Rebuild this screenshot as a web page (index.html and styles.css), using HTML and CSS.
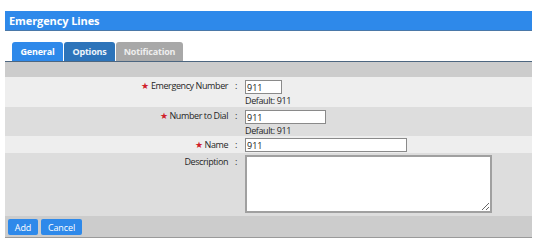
FILE: index.html
```html
<!DOCTYPE html>
<html lang="en">
<head>
    <meta charset="UTF-8">
    <meta name="viewport" content="width=device-width, initial-scale=1.0">
    <title>Emergency Lines</title>
    <link rel="stylesheet" href="styles.css">
</head>
<body>
    <div class="panel">
        <div class="panel-title">Emergency Lines</div>

        <div class="tabs">
            <button class="tab tab-active">General</button>
            <button class="tab tab-options">Options</button>
            <button class="tab tab-off">Notification</button>
        </div>
        <div class="toolbar"></div>

        <div class="form">
            <div class="row row-light row-tall">
                <label class="label"><span class="req">&#9733;</span> Emergency Number <span class="colon">:</span></label>
                <div class="field">
                    <input class="input input-xs" type="text" value="911">
                    <div class="hint">Default: 911</div>
                </div>
            </div>
            <div class="row row-dark row-tall">
                <label class="label"><span class="req">&#9733;</span> Number to Dial <span class="colon">:</span></label>
                <div class="field">
                    <input class="input input-sm" type="text" value="911">
                    <div class="hint">Default: 911</div>
                </div>
            </div>
            <div class="row row-light">
                <label class="label"><span class="req">&#9733;</span> Name <span class="colon">:</span></label>
                <div class="field">
                    <input class="input input-md" type="text" value="911">
                </div>
            </div>
            <div class="row row-dark row-area">
                <label class="label">Description <span class="colon">:</span></label>
                <div class="field">
                    <textarea class="input textarea"></textarea>
                </div>
            </div>
        </div>

        <div class="actions">
            <button class="btn btn-add">Add</button>
            <button class="btn btn-cancel">Cancel</button>
        </div>
    </div>
</body>
</html>
```

FILE: styles.css
```css
:root {
    --blue: #2e89ea;
    --blue-dark: #2d74ba;
    --tab-off: #a8a8a8;
    --row-light: #eeeeee;
    --row-dark: #dddddd;
    --band: #cccccc;
    --text: #262626;
}

body {
    margin: 0;
    background: #ffffff;
    font-family: 'Open Sans', 'Noto Sans', sans-serif;
    font-size: 9px;
    letter-spacing: -0.4px;
    color: var(--text);
}

.panel {
    width: 527px;
    margin: 11px 0 0 5px;
}

.panel-title {
    height: 19px;
    line-height: 19px;
    padding-left: 4px;
    background: var(--blue);
    border-bottom: 1px solid #4a78a8;
    color: #ffffff;
    font-size: 11px;
    font-weight: bold;
    letter-spacing: -0.1px;
}

.tabs {
    display: flex;
    gap: 1px;
    padding: 11px 0 0 7px;
    border-bottom: 1px solid #4d6680;
}

.tab {
    height: 19px;
    padding: 0;
    border: none;
    border-radius: 3px 3px 0 0;
    color: #ffffff;
    font-family: inherit;
    font-size: 9px;
    font-weight: bold;
    letter-spacing: -0.2px;
    width: 51px;
    background: var(--blue);
}

.tab-options {
    background: var(--blue-dark);
    color: #eef4fb;
}

.tab-off {
    width: 67px;
    background: var(--tab-off);
    color: #eeeeee;
}

.toolbar {
    height: 15px;
    background: var(--band);
}

.row {
    display: grid;
    grid-template-columns: 240px 1fr;
    height: 17px;
    background: var(--row-light);
}

.row-dark {
    background: var(--row-dark);
}

.row-tall {
    height: 30px;
}

.row-dark.row-tall {
    height: 29px;
}

.row-area {
    height: 63px;
}

.label {
    text-align: right;
    padding: 3px 8px 0 0;
    line-height: 12px;
}

.req {
    color: #d0202a;
    font-size: 9px;
}

.colon {
    margin-left: 5px;
}

.field {
    padding-top: 2px;
}

.row-tall .field {
    padding-top: 3px;
}

.input {
    box-sizing: border-box;
    display: block;
    height: 14px;
    margin: 0;
    padding: 0 1px;
    border: 1px solid #8a8a8a;
    background: #ffffff;
    font-family: inherit;
    font-size: 9px;
    letter-spacing: 0;
    color: #1a1a1a;
}

.input-xs {
    width: 37px;
}

.input-sm {
    width: 81px;
}

.input-md {
    width: 162px;
}

.textarea {
    width: 247px;
    height: 58px;
    border: 2px solid #a0a0a0;
    resize: both;
}

.hint {
    margin-top: 1px;
    line-height: 12px;
}

.actions {
    display: flex;
    gap: 3px;
    height: 22px;
    padding: 3px 0 0 3px;
    box-sizing: border-box;
    background: var(--band);
    border-bottom: 1px solid #9a9a9a;
}

.btn {
    height: 16px;
    padding: 0;
    border: none;
    border-radius: 2px;
    background: var(--blue);
    color: #ffffff;
    font-family: inherit;
    font-size: 9px;
    letter-spacing: -0.1px;
}

.btn-add {
    width: 30px;
}

.btn-cancel {
    width: 41px;
}
```
